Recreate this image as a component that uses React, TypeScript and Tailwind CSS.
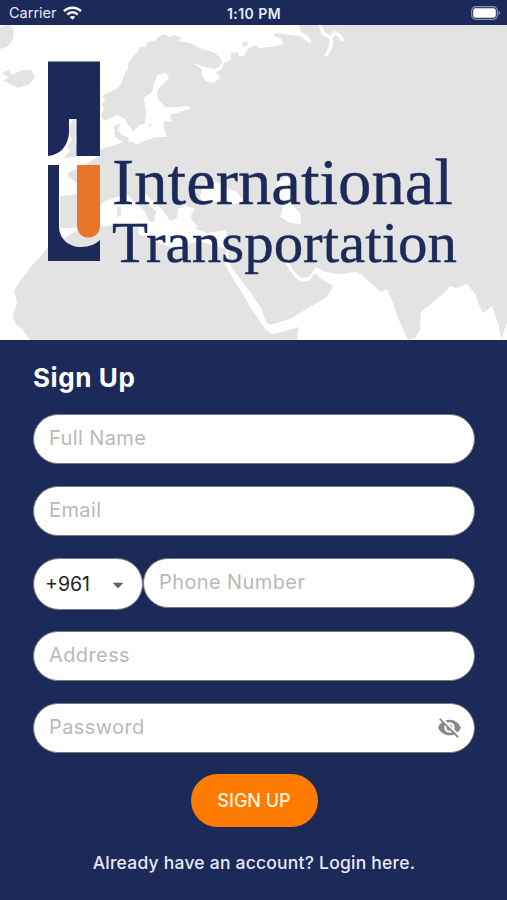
import { useState } from "react";
import { MdArrowDropDown, MdVisibilityOff } from "react-icons/md";

const field =
  "h-[50px] w-full min-w-0 rounded-full border border-[#77777c] bg-white px-[15px] pb-[2px] text-[20px] tracking-[0.4px] text-[#222] outline-none placeholder:text-[#b9b9b9]";

function StatusBar() {
  return (
    <div className="grid h-[25px] grid-cols-3 items-center bg-[#1c2a59] pt-[2px] pr-[6px] pl-[9px] text-[14.5px] leading-none text-[#e6e9f4]">
      <div className="flex items-center gap-[6px]">
        <span>Carrier</span>
        <svg className="-mt-[2px]" width="19" height="14" viewBox="0 0 19 14" fill="none" stroke="#fff" strokeWidth="2.5">
          <path d="M1 5.2C5.7.5 13.3.5 18 5.2" />
          <path d="M4.3 8.5C7.2 5.6 11.8 5.6 14.7 8.5" />
          <path d="M6.8 11C8.3 9.5 10.7 9.5 12.2 11L9.5 13.7Z" fill="#fff" stroke="none" />
        </svg>
      </div>
      <span className="-ml-[2px] text-center text-[14px] font-semibold tracking-[0.45px] whitespace-nowrap">1:10 PM</span>
      <svg className="-mt-[2px] justify-self-end" width="30" height="14" viewBox="0 0 30 14">
        <rect x="0.7" y="0.7" width="25.6" height="12.6" rx="4" fill="none" stroke="#8c94b0" strokeWidth="1.2" />
        <rect x="2.2" y="2.2" width="22.6" height="9.6" rx="2.4" fill="#fff" />
        <path d="M27.6 4.8c2 .7 2 3.7 0 4.4Z" fill="#8c94b0" />
      </svg>
    </div>
  );
}

function Banner() {
  return (
    <svg className="block h-[315px] w-full bg-white" viewBox="0 25 507 315" preserveAspectRatio="none">
      <g fill="#e3e3e3">
        {/* Eurasia */}
        <path d="M104 121L101 115L104 109L102 104L105 100L102 96L112 91L118 88L122 82L124 75L128 69L128 63L133 57L140 49L137 48L146 46L148 42L155 41L158 37L165 34L169 37L174 35L182 38L178 41L190 43L202 49L213 52L221 58L222 64L216 69L205 67L193 63L202 69L202 76L206 81L213 83L220 78L216 72L222 69L224 63L231 60L231 53L238 52L239 57L245 55L248 49L254 45L260 48L270 47L284 44L281 38L273 36L276 33L290 35L300 36L309 43L312 42L308 36L301 32L299 25H507V322L501 340L499 326L492 306L483 313L479 305L476 295L467 284L456 288L450 286L444 293L435 300L421 312L420 330L415 338L408 340L398 318L393 303L387 289L381 292L372 284L362 275L355 272L340 274L325 272L316 267L309 277L301 278L293 270L286 258L281 257L287 266L295 277L301 282L309 281L315 273L321 279L333 286L327 297L310 307L290 319L270 325L266 322L261 308L254 298L246 286L240 279L231 266L228 255L226 230L207 233L195 229L185 216L190 207L178 208L177 218L170 221L163 210L155 203L147 195L140 193L145 202L156 211L154 222L149 221L145 211L134 202L128 195L116 197L104 202L95 210L88 222L74 228L60 228V196L77 194L80 188L76 182L68 177L68 173L84 165L96 158L101 149L112 146L123 142L115 137L114 126L121 123L125 127L119 132L130 142L150 139L166 134L162 121L139 125L132 133L125 119L117 115Z" />
        {/* Africa */}
        <path d="M48 247L40 257L31 266L25 275L20 281L14 291L17 303L13 315L15 323L23 330L30 340H297L299 327L286 331L272 334L266 330L258 318L252 310L244 296L239 288L232 277L224 263L227 248L217 247L202 242L190 243L184 252L170 247L155 242L151 237L139 235L138 225L120 224L99 227L76 231L62 240Z" />
        {/* islands */}
        <path d="M0 27L10 25L14 30L13 39L7 47L0 49ZM2 73L9 70L11 75L23 70L31 70L35 77L30 84L18 88L12 85L3 80L9 78ZM68 128L75 117L76 132L75 143L80 149L76 157L64 158L70 150L67 147L72 140ZM56 142L64 139L63 151L55 153ZM117 207L121 206L121 215L117 217ZM134 224L147 223L145 229Z" />
        <path d="M242 43L247 41L248 45L243 47ZM123 136L129 137L127 141ZM203 236L210 234L207 238Z" />
      </g>
      <g fill="#fff">
        {/* Baltic, Black and Caspian seas */}
        <path d="M157 75L166 73L169 78L161 86L157 91L158 99L165 107L177 107L187 106L191 108L180 112L170 115L172 122L164 121L163 128L167 137L156 137L146 140L136 145L130 138L126 128L117 132L122 119L130 127L134 132L140 130L145 122L146 112L144 98L152 92L154 84Z" />
        <path d="M203 187L210 178L219 184L223 180L226 188L237 192L244 202L235 204L222 200L205 205L200 197Z" />
        <path d="M278 182L286 177L292 180L287 187L292 193L289 199L294 207L300 213L301 224L290 223L280 217L283 207L278 200L275 192Z" />
        <path d="M184 205L195 209L190 217L198 227L189 230L180 219Z" />
      </g>
      <circle cx="150" cy="125" r="1.5" fill="#e3e3e3" />
      <path d="M320 24L323 33L331 38L331 46L326 56M330 38L335 33L339 35L343 41" fill="none" stroke="#fff" strokeWidth="3.5" />

      <path d="M48 61.5H100V156H76.5V119H69V133C68 146 60 155 48 156Z" fill="#1c2a59" />
      <path d="M48 165H59V226C59 239 69 247 81 247C89 247 96 244 100 240V261H48Z" fill="#1c2a59" />
      <path d="M77 165H100V226a11.5 11.5 0 0 1-23 0Z" fill="#e87528" />
      <g fill="#1c2a59" stroke="#1c2a59" strokeWidth="0.4" className="font-['Liberation_Serif',serif]">
        <text x="112" y="203.5" fontSize="66" textLength="341" lengthAdjust="spacingAndGlyphs">International</text>
        <text x="112" y="262" fontSize="57" textLength="345" lengthAdjust="spacingAndGlyphs">Transportation</text>
      </g>
    </svg>
  );
}

export default function App() {
  const [showPassword, setShowPassword] = useState(false);

  return (
    <div className="flex h-[900px] w-[507px] flex-col bg-[#1c2a59] font-['Inter',sans-serif]">
      <StatusBar />
      <Banner />
      <form className="flex flex-col pt-[20px] pr-[32px] pl-[33px]" onSubmit={e => e.preventDefault()}>
        <h1 className="mb-[18px] text-[26px] leading-[36px] font-bold tracking-[0.6px] text-white">Sign Up</h1>
        <div className="flex flex-col gap-[21.8px]">
          <input className={field} placeholder="Full Name" />
          <input className={field} placeholder="Email" />
          <div className="flex items-start">
            <button type="button" className="flex h-[52px] w-[110px] shrink-0 items-center justify-between rounded-full border border-[#77777c] bg-white pt-[2px] pr-[11px] pl-[11px] text-[19.5px] text-[#222]">
              +961
              <MdArrowDropDown className="mt-[1px] size-[26px] text-[#616161]" />
            </button>
            <input className={field} placeholder="Phone Number" />
          </div>
          <input className={field} placeholder="Address" />
          <div className="relative">
            <input type={showPassword ? "text" : "password"} className={field} placeholder="Password" />
            <button type="button" className="absolute top-[12px] right-[13px]" onClick={() => setShowPassword(!showPassword)}>
              <MdVisibilityOff className="size-[25px] text-[#8a8a8a]" />
            </button>
          </div>
        </div>
        <button className="mt-[21px] h-[53px] w-[127px] self-center rounded-full bg-[#ff7b00] text-[18px] font-medium text-[#fff3e0]">SIGN UP</button>
        <a className="mt-[24px] text-center text-[17.5px] leading-[24px] font-medium tracking-[0.22px] text-[#e6e9f4]">Already have an account? Login here.</a>
      </form>
    </div>
  );
}
